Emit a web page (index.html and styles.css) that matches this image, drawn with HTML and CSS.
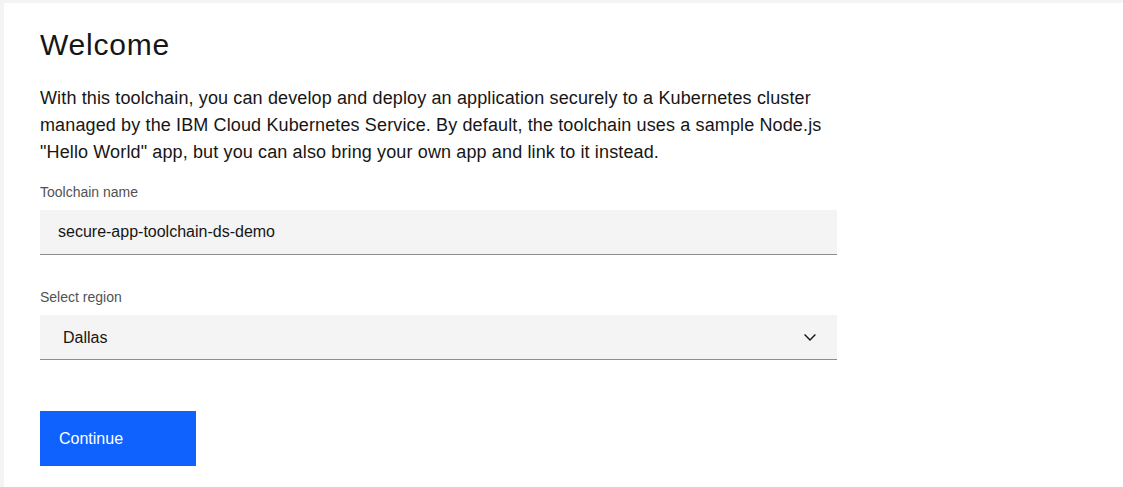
FILE: index.html
```html
<!DOCTYPE html>
<html lang="en">
<head>
<meta charset="utf-8">
<title>Welcome</title>
<link rel="stylesheet" href="styles.css">
</head>
<body>
<main class="panel">
  <h1 class="title">Welcome</h1>
  <p class="intro">With this toolchain, you can develop and deploy an application securely to a Kubernetes cluster managed by the IBM Cloud Kubernetes Service. By default, the toolchain uses a sample Node.js "Hello World" app, but you can also bring your own app and link to it instead.</p>
  <div class="field">
    <label class="label" for="tc-name">Toolchain name</label>
    <input class="text-input" id="tc-name" type="text" value="secure-app-toolchain-ds-demo">
  </div>
  <div class="field field-select">
    <label class="label" for="region">Select region</label>
    <div class="select-wrap">
      <select class="select" id="region">
        <option>Dallas</option>
      </select>
      <svg class="chevron" width="12" height="7" viewBox="0 0 12 7" aria-hidden="true"><path d="M0.6 0.6 L6 6 L11.4 0.6" fill="none" stroke="#161616" stroke-width="1.4"/></svg>
    </div>
  </div>
  <button class="btn" type="button">Continue</button>
</main>
</body>
</html>
```
FILE: styles.css
```css
html, body {
  margin: 0;
  height: 100%;
}
body {
  background: #f4f4f4;
  padding: 3px 0 0 4px;
  box-sizing: border-box;
  font-family: "Liberation Sans", Arial, sans-serif;
  color: #161616;
}
.panel {
  background: #ffffff;
  min-height: 100%;
  padding: 24px 36px 0 36px;
  box-sizing: border-box;
}
.title {
  margin: 0;
  font-size: 30px;
  line-height: 35px;
  font-weight: 400;
  letter-spacing: 0.8px;
  color: #161616;
}
.intro {
  margin: 23px 0 0 0;
  font-size: 18px;
  line-height: 27px;
  letter-spacing: 0.13px;
  max-width: 800px;
  color: #161616;
}
.field {
  display: flex;
  flex-direction: column;
  gap: 9px;
  width: 797px;
  margin-top: 17px;
}
.field-select {
  margin-top: 33px;
}
.label {
  font-size: 14px;
  line-height: 18px;
  color: #525252;
}
.text-input, .select {
  height: 45px;
  box-sizing: border-box;
  border: 0;
  border-bottom: 1px solid #8d8d8d;
  background: #f4f4f4;
  margin: 0;
  font-size: 16px;
  color: #161616;
  outline: none;
  width: 100%;
}
.text-input {
  padding: 0 18px;
  font-family: "Liberation Sans", Arial, sans-serif;
}
.select-wrap {
  position: relative;
}
.select {
  appearance: none;
  -webkit-appearance: none;
  padding: 0 48px 0 23px;
  font-family: "Liberation Sans", Arial, sans-serif;
  border-radius: 0;
}
.chevron {
  position: absolute;
  right: 21px;
  top: 19px;
  pointer-events: none;
}
.btn {
  display: block;
  margin-top: 51px;
  width: 156px;
  height: 55px;
  border: 0;
  border-radius: 0;
  background: #0f62fe;
  color: #ffffff;
  font-family: "Liberation Sans", Arial, sans-serif;
  font-size: 16px;
  text-align: left;
  padding: 0 0 0 19px;
  cursor: pointer;
}
```
